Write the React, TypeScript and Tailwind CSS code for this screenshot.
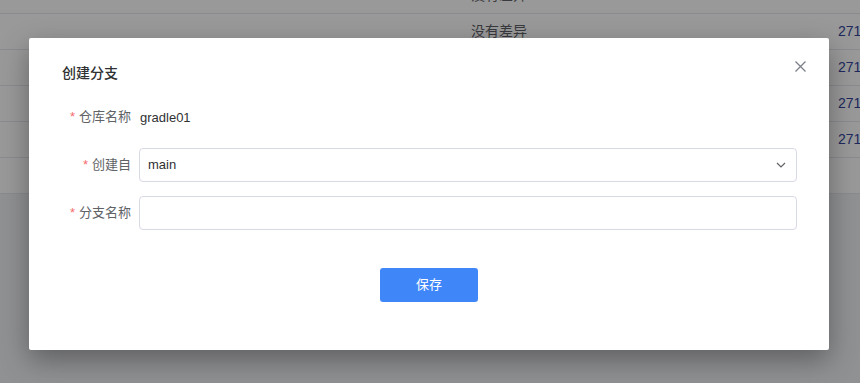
import React from "react";

const rows = [true, true, true, true, true, false];

function Field({ label, children }: { label: string; children: React.ReactNode }) {
  return (
    <div className="flex items-center h-[34px]">
      <div className="w-[77px] shrink-0 pr-[8px] text-right text-[13px] text-[#606266] whitespace-nowrap">
        <span className="text-[#f56c6c] mr-[4px]">*</span>
        {label}
      </div>
      <div className="flex-1 min-w-0">{children}</div>
    </div>
  );
}

export default function App() {
  return (
    <div
      className="relative w-[860px] h-[383px] overflow-hidden bg-[#f0f2f5]"
      style={{ fontFamily: '"Liberation Sans", "Noto Sans CJK SC", sans-serif' }}
    >
      <div className="mt-[-22px] bg-white">
        {rows.map((has, i) => (
          <div
            key={i}
            className="grid grid-cols-[471px_367px_1fr] h-[36px] items-center border-b border-[#e6e8ee] text-[14px]"
          >
            <div />
            <div className="text-[#606266]">{i < 2 ? "没有差异" : ""}</div>
            <div className="text-[#34459c] whitespace-nowrap">{has ? "2712" : ""}</div>
          </div>
        ))}
      </div>

      <div className="absolute inset-0 bg-black/40" />

      <div className="absolute inset-0 flex pl-[29px] pt-[38px]">
        <div className="relative w-[800px] h-[312px] bg-white rounded-[2px] shadow-[0_10px_28px_rgba(0,0,0,0.35)] pl-[33px] pr-[32px] pt-[25px]">
          <div className="text-[14px] font-medium text-[#303133] leading-[20px]">创建分支</div>
          <button className="absolute right-[23px] top-[22px] w-[12px] h-[12px] flex items-center justify-center">
            <svg width="11" height="11" viewBox="0 0 11 11" fill="none">
              <path d="M0.5 0.5L10.5 10.5M10.5 0.5L0.5 10.5" stroke="#7b7f8a" strokeWidth="1.3" />
            </svg>
          </button>

          <div className="mt-[17px] flex flex-col gap-[14px]">
            <Field label="仓库名称">
              <span className="text-[13px] text-[#303133] pl-[1px]">gradle01</span>
            </Field>
            <Field label="创建自">
              <div className="h-[34px] border border-[#d7dae3] rounded-[4px] flex items-center justify-between pl-[8px] pr-[10px]">
                <span className="text-[13px] text-[#303133]">main</span>
                <svg width="10" height="6" viewBox="0 0 10 6" fill="none">
                  <path d="M1 1L5 5L9 1" stroke="#606266" strokeWidth="1.2" />
                </svg>
              </div>
            </Field>
            <Field label="分支名称">
              <div className="h-[34px] border border-[#d7dae3] rounded-[4px]" />
            </Field>
          </div>

          <div className="mt-[38px] flex justify-center pr-[1px]">
            <button className="w-[98px] h-[34px] rounded-[3px] bg-[#3f87f8] text-white text-[13px]">
              保存
            </button>
          </div>
        </div>
      </div>
    </div>
  );
}
